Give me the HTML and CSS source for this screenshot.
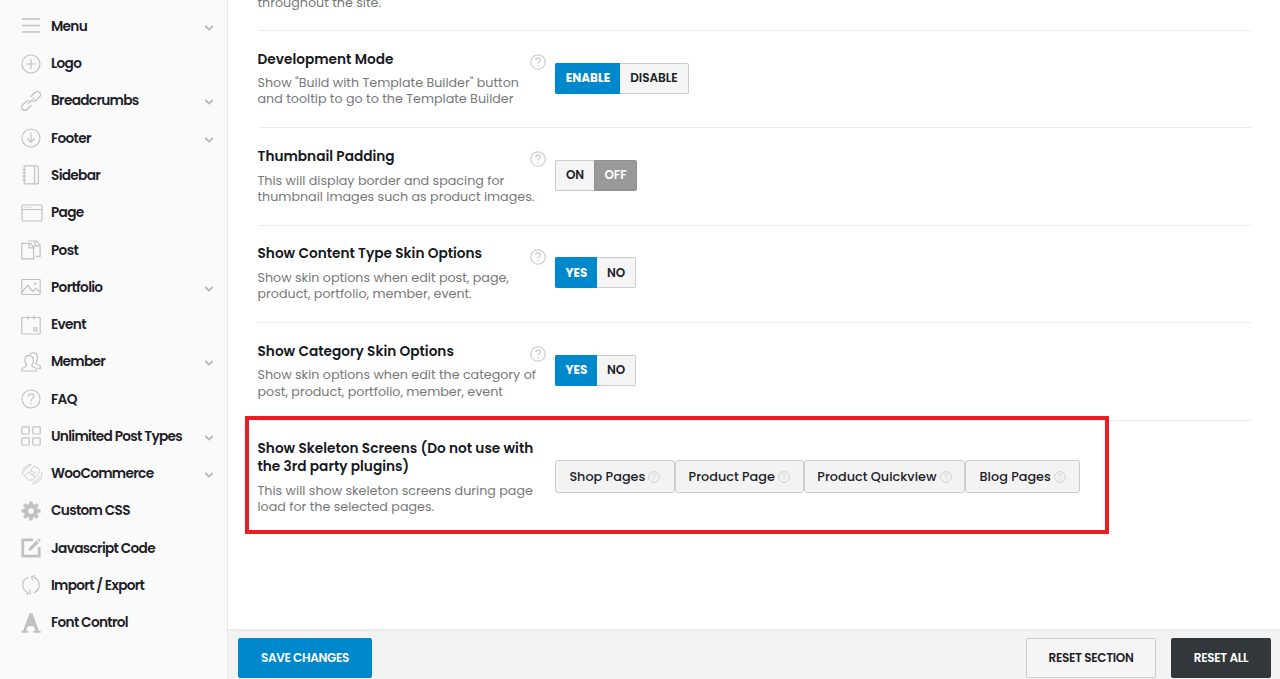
FILE: index.html
```html
<!DOCTYPE html>
<html lang="en">
<head>
  <meta charset="UTF-8">
  <meta name="viewport" content="width=device-width, initial-scale=1">
  <title>Theme Options</title>
  <link rel="stylesheet" href="styles.css">
</head>
<body>

<svg class="defs" width="0" height="0">
  <symbol id="chevron" viewBox="0 0 10 8"><path d="M1.3 2 L5 5.6 L8.7 2"/></symbol>
  <symbol id="help" viewBox="0 0 20 20"><circle cx="10" cy="10" r="9"/><path d="M7.2 7.8c0-1.7 1.2-2.8 2.8-2.8s2.8 1.1 2.8 2.6c0 2-2.8 2.2-2.8 4.6M10 13.8v1.4"/></symbol>
</svg>

<div class="wrapper">
  <nav class="sidebar">
    <a class="item"><svg class="icon menu" viewBox="0 0 20 20"><path d="M1 3h18M1 9.5h18M1 16h18"/></svg><span>Menu</span><svg class="arrow"><use href="#chevron"/></svg></a>
    <a class="item"><svg class="icon" viewBox="0 0 20 20"><circle cx="10" cy="10" r="9"/><path d="M5 10h10M10 5v10"/></svg><span>Logo</span></a>
    <a class="item"><svg class="icon" viewBox="0 0 20 20"><g transform="rotate(-45 10 10)"><path d="M7.5 13.2H1.2a3.2 3.2 0 0 1 0-6.4h4.6a3.2 3.2 0 0 1 3 2.2"/><path d="M12.5 6.8h6.3a3.2 3.2 0 0 1 0 6.4h-4.6a3.2 3.2 0 0 1-3-2.2M5.5 10h9"/></g></svg><span>Breadcrumbs</span><svg class="arrow"><use href="#chevron"/></svg></a>
    <a class="item"><svg class="icon" viewBox="0 0 20 20"><circle cx="10" cy="10" r="9"/><path d="M10 5v9M6.3 10.5L10 14.1l3.7-3.6"/></svg><span>Footer</span><svg class="arrow"><use href="#chevron"/></svg></a>
    <a class="item"><svg class="icon" viewBox="0 0 20 20"><rect x="3.2" y=".8" width="14.2" height="18" rx="1"/><path d="M13.6 1v17.6M1.6 4.5h3.2M1.6 7.8h3.2M1.6 11.2h3.2M1.6 14.8h3.2"/></svg><span>Sidebar</span></a>
    <a class="item"><svg class="icon wide" viewBox="0 0 22 20"><rect x="1" y="2" width="20" height="16" rx="1.5"/><path d="M1 6.5h20M3.5 4.3h1M6.5 4.3h1M9.5 4.3h1"/></svg><span>Page</span></a>
    <a class="item"><svg class="icon" viewBox="0 0 20 20"><path d="M.8 3.4h8.4l3.4 3.4v12H.8zM8.2 3.4v4.4h4.4M7 1h8.2l3.9 3.9v11.4h-4.6M14 1v4.9h5"/></svg><span>Post</span></a>
    <a class="item"><svg class="icon" viewBox="0 0 20 20"><rect x=".8" y="2.5" width="18.4" height="15" rx=".8"/><path d="M1 14.5l5.8-6 5 5.8 3-3 4.2 3.7"/><circle class="solid" cx="14" cy="6.6" r="1.2"/></svg><span>Portfolio</span><svg class="arrow"><use href="#chevron"/></svg></a>
    <a class="item"><svg class="icon" viewBox="0 0 20 20"><rect x=".8" y="2.5" width="18.4" height="16.5" rx=".8"/><path d="M7 .5v4M13 .5v4M12.8 12.8h3v3h-3z"/></svg><span>Event</span></a>
    <a class="item"><svg class="icon" viewBox="0 0 20 20"><path d="M.8 19v-2c0-1.6 5-1.5 5-3.4 0-1-1.9-2-1.9-5 0-3.3 1.5-5.2 4.3-5.2s4.3 1.9 4.3 5.2c0 3-1.9 4-1.9 5 0 1.9 5 1.8 5 3.4v2zM9 2.4C9.7 1.4 10.8.8 12.2.8c2.7 0 4.3 1.8 4.3 5.2 0 3-1.8 4-1.8 5 0 1.8 4.7 1.7 4.7 3.5v1.8h-2.8"/></svg><span>Member</span><svg class="arrow"><use href="#chevron"/></svg></a>
    <a class="item"><svg class="icon"><use href="#help"/></svg><span>FAQ</span></a>
    <a class="item"><svg class="icon" viewBox="0 0 20 20"><rect x=".8" y=".8" width="7.4" height="7.2" rx=".8"/><rect x="11.8" y=".8" width="7.4" height="7.2" rx=".8"/><rect x=".8" y="11.8" width="7.4" height="7.2" rx=".8"/><rect x="11.8" y="11.8" width="7.4" height="7.2" rx=".8"/></svg><span>Unlimited Post Types</span><svg class="arrow"><use href="#chevron"/></svg></a>
    <a class="item"><svg class="icon woo" viewBox="0 0 22 22"><path d="M1.5 12A9.5 9.5 0 0 1 11 1.2M3.3 8.5A8 8 0 0 1 9.5 3M20.5 9.5A9.5 9.5 0 0 1 11 20.8M18.7 13.5A8 8 0 0 1 12.5 19"/><path d="M3.5 12.8l4-4 1.8.7 1.4-1.5-.6-1.9 3.4-2.9 1.7 1.5 1.6-.3 2.2 3-1.7 1.5.5 1.7-6.5 6.6-1.7-.7-1.5 1.3zM9 10l1.8 1.8 1.9-.5.2 2 1.7 1.5M10.7 8l2 1.5 2.2-.6"/></svg><span>WooCommerce</span><svg class="arrow"><use href="#chevron"/></svg></a>
    <a class="item"><svg class="icon" viewBox="0 0 20 20"><circle cx="10" cy="10" r="5" stroke-width="4.4"/><path stroke-width="3.6" d="M10 .4v3M10 16.6v3M.4 10h3M16.6 10h3M3.2 3.2l2 2M14.8 14.8l2 2M3.2 16.8l2-2M14.8 5.2l2-2"/></svg><span>Custom CSS</span></a>
    <a class="item"><svg class="icon" viewBox="0 0 20 20"><path stroke-width="2.8" d="M12 1.8H1.8v16.4h16.4V9"/><path class="solid" d="M7.2 13.2l1-3.5 7.2-7.2 2.4 2.4-7.2 7.2zM16.2 1.7L17.5.4l2.4 2.4-1.3 1.3z"/></svg><span>Javascript Code</span></a>
    <a class="item"><svg class="icon" viewBox="0 0 20 20"><path d="M7.5 2.3C.2 4.5-.2 14.5 7 17.6M12.5 17.7C19.8 15.5 20.2 5.5 13 2.4M8.5 14.6l.8 3.7-3.8 1M11.5 5.4l-.8-3.7 3.8-1"/></svg><span>Import / Export</span></a>
    <a class="item"><svg class="icon" viewBox="0 0 20 20"><path class="solid" d="M8.5.3h3l6.1 17.3 2.2.6v1.5h-7.5v-1.5l2-.6-1.4-4.3H6.6l-1.3 4.3 2 .6v1.5H.2v-1.5l2-.6z"/></svg><span>Font Control</span></a>
  </nav>

  <main class="content">
    <section class="field field-first">
      <div class="info">
        <p class="desc">throughout the site.</p>
      </div>
    </section>

    <section class="field">
      <div class="info">
        <h3>Development Mode</h3>
        <p class="desc">Show "Build with Template Builder" button<br>and tooltip to go to the Template Builder</p>
      </div>
      <svg class="help"><use href="#help"/></svg>
      <div class="switch">
        <label class="on enable">ENABLE</label><label class="disable">DISABLE</label>
      </div>
    </section>

    <section class="field">
      <div class="info">
        <h3>Thumbnail Padding</h3>
        <p class="desc">This will display border and spacing for<br>thumbnail images such as product images.</p>
      </div>
      <svg class="help"><use href="#help"/></svg>
      <div class="switch">
        <label class="short">ON</label><label class="off">OFF</label>
      </div>
    </section>

    <section class="field">
      <div class="info">
        <h3>Show Content Type Skin Options</h3>
        <p class="desc">Show skin options when edit post, page,<br>product, portfolio, member, event.</p>
      </div>
      <svg class="help"><use href="#help"/></svg>
      <div class="switch">
        <label class="on yes">YES</label><label class="short">NO</label>
      </div>
    </section>

    <section class="field">
      <div class="info">
        <h3>Show Category Skin Options</h3>
        <p class="desc">Show skin options when edit the category of<br>post, product, portfolio, member, event</p>
      </div>
      <svg class="help"><use href="#help"/></svg>
      <div class="switch">
        <label class="on yes">YES</label><label class="short">NO</label>
      </div>
    </section>

    <section class="field field-last">
      <div class="info">
        <h3>Show Skeleton Screens (Do not use with<br>the 3rd party plugins)</h3>
        <p class="desc">This will show skeleton screens during page<br>load for the selected pages.</p>
      </div>
      <div class="button-set">
        <label class="shop">Shop Pages<svg><use href="#help"/></svg></label>
        <label class="product">Product Page<svg><use href="#help"/></svg></label>
        <label class="quick">Product Quickview<svg><use href="#help"/></svg></label>
        <label class="blog">Blog Pages<svg><use href="#help"/></svg></label>
      </div>
      <div class="highlight"></div>
    </section>

    <footer class="actions">
      <button class="save">SAVE CHANGES</button>
      <button class="reset-section">RESET SECTION</button>
      <button class="reset-all">RESET ALL</button>
    </footer>
  </main>
</div>

</body>
</html>
```
FILE: styles.css
```css
* {
  box-sizing: border-box;
  margin: 0;
  padding: 0;
}

body {
  font-family: Poppins, Inter, sans-serif;
  background: #fff;
  color: #1d2127;
  height: 100vh;
  overflow: hidden;
}

svg {
  fill: none;
  stroke: #c0c1c3;
  stroke-width: 1.2;
  flex: none;
}

.defs {
  position: absolute;
}

.wrapper {
  display: flex;
  height: 679px;
}

/* Sidebar */
.sidebar {
  width: 228px;
  flex: none;
  background: #fafafa;
  border-right: 1px solid #e7e7e7;
  padding-top: 7.8px;
}

.item {
  display: flex;
  align-items: center;
  height: 37.28px;
  padding: 0 13px 0 21px;
  font-size: 13.7px;
  font-weight: 600;
  letter-spacing: -0.7px;
  white-space: nowrap;
}

.item span {
  padding-top: 1px;
}

.item .icon {
  width: 20px;
  height: 20px;
  margin: 0 10px 0 0;
}

.item .icon.menu {
  stroke-width: 1.4;
}

.item .icon.wide {
  width: 22px;
  margin-right: 8px;
}

.item .icon.woo {
  width: 22px;
  height: 22px;
  margin-right: 8px;
  stroke-width: .8;
}

.item .arrow {
  width: 10px;
  height: 8px;
  margin: 3px 0 0 auto;
  stroke: #b4b5b7;
  stroke-width: 1.8;
}

svg .solid {
  fill: #c0c1c3;
  stroke: none;
}

/* Options */
.content {
  flex: 1;
  display: flex;
  flex-direction: column;
}

.field {
  position: relative;
  display: flex;
  height: 97.4px;
  flex: none;
  margin: 0 29px 0 29.5px;
  padding-top: 18.5px;
  border-bottom: 1px solid #ececec;
}

.field-first {
  height: 31px;
  padding: 0;
}

.field-first .desc {
  margin-top: -5.5px;
}

.field-last {
  height: 114px;
  border-bottom: 0;
}

.info {
  width: 272.5px;
  flex: none;
  white-space: nowrap;
}

h3 {
  font-size: 13.7px;
  line-height: 18px;
  font-weight: 600;
  color: #16191d;
  margin: 1px 0 6.7px;
}

.desc {
  font-size: 12.7px;
  line-height: 16.3px;
  color: #777;
}

.help {
  width: 16px;
  height: 16px;
  margin-top: 4.3px;
  stroke: #cfcfcf;
  stroke-width: 1.6;
}

.switch {
  display: flex;
  height: 31px;
  margin: 13px 0 0 9px;
}

.switch label {
  display: flex;
  align-items: center;
  justify-content: center;
  background: #f5f5f5;
  border: 1px solid #ccc;
  font-size: 12px;
  font-weight: 600;
}

.switch label:first-child {
  border-radius: 2px 0 0 2px;
  border-right: 0;
}

.switch label:last-child {
  border-radius: 0 2px 2px 0;
}

.switch .on {
  background: #0088cc;
  border-color: #0088cc;
  color: #fff;
  font-weight: 700;
}

.switch .on + label {
  border-left: 0;
}

.switch .off {
  background: #999;
  border-color: #8f8f8f;
  color: #fff;
  width: 43px;
}

.switch .enable {
  width: 65px;
}

.switch .disable {
  width: 69px;
}

.switch .yes {
  width: 42px;
}

.switch .short {
  width: 39px;
}

.button-set {
  display: flex;
  height: 33px;
  margin: 21px 0 0 25px;
}

.button-set label {
  display: flex;
  align-items: center;
  justify-content: center;
  gap: 3px;
  background: #f3f3f3;
  border: 1px solid #ccc;
  border-radius: 3px;
  font-size: 12.8px;
  font-weight: 500;
  white-space: nowrap;
}

.button-set svg {
  width: 12px;
  height: 12px;
  stroke: #d0d0d0;
  stroke-width: 1.6;
}

.shop {
  width: 119.7px;
}

.product {
  width: 129px;
}

.quick {
  width: 161.5px;
}

.blog {
  width: 115px;
}

.highlight {
  position: absolute;
  left: -12.5px;
  top: -4.5px;
  width: 864px;
  height: 118px;
  border: 4px solid #ed1c24;
}

/* Bottom bar */
.actions {
  display: flex;
  height: 50px;
  margin-top: auto;
  padding: 7px 9px 0 10px;
  background: #f3f3f3;
  border-top: 2px solid #ebebeb;
}

.actions button {
  height: 40px;
  border: 1px solid #ccc;
  border-radius: 2px;
  font-family: inherit;
  font-size: 12px;
  font-weight: 600;
  letter-spacing: -0.32px;
}

.actions .save {
  width: 134px;
  background: #0088cc;
  border-color: #0088cc;
  color: #fff;
}

.actions .reset-section {
  width: 130px;
  margin-left: auto;
  background: #f5f5f5;
  color: #1d2127;
}

.actions .reset-all {
  width: 100px;
  margin-left: 15px;
  background: #32373c;
  border-color: #32373c;
  color: #fff;
}
```
